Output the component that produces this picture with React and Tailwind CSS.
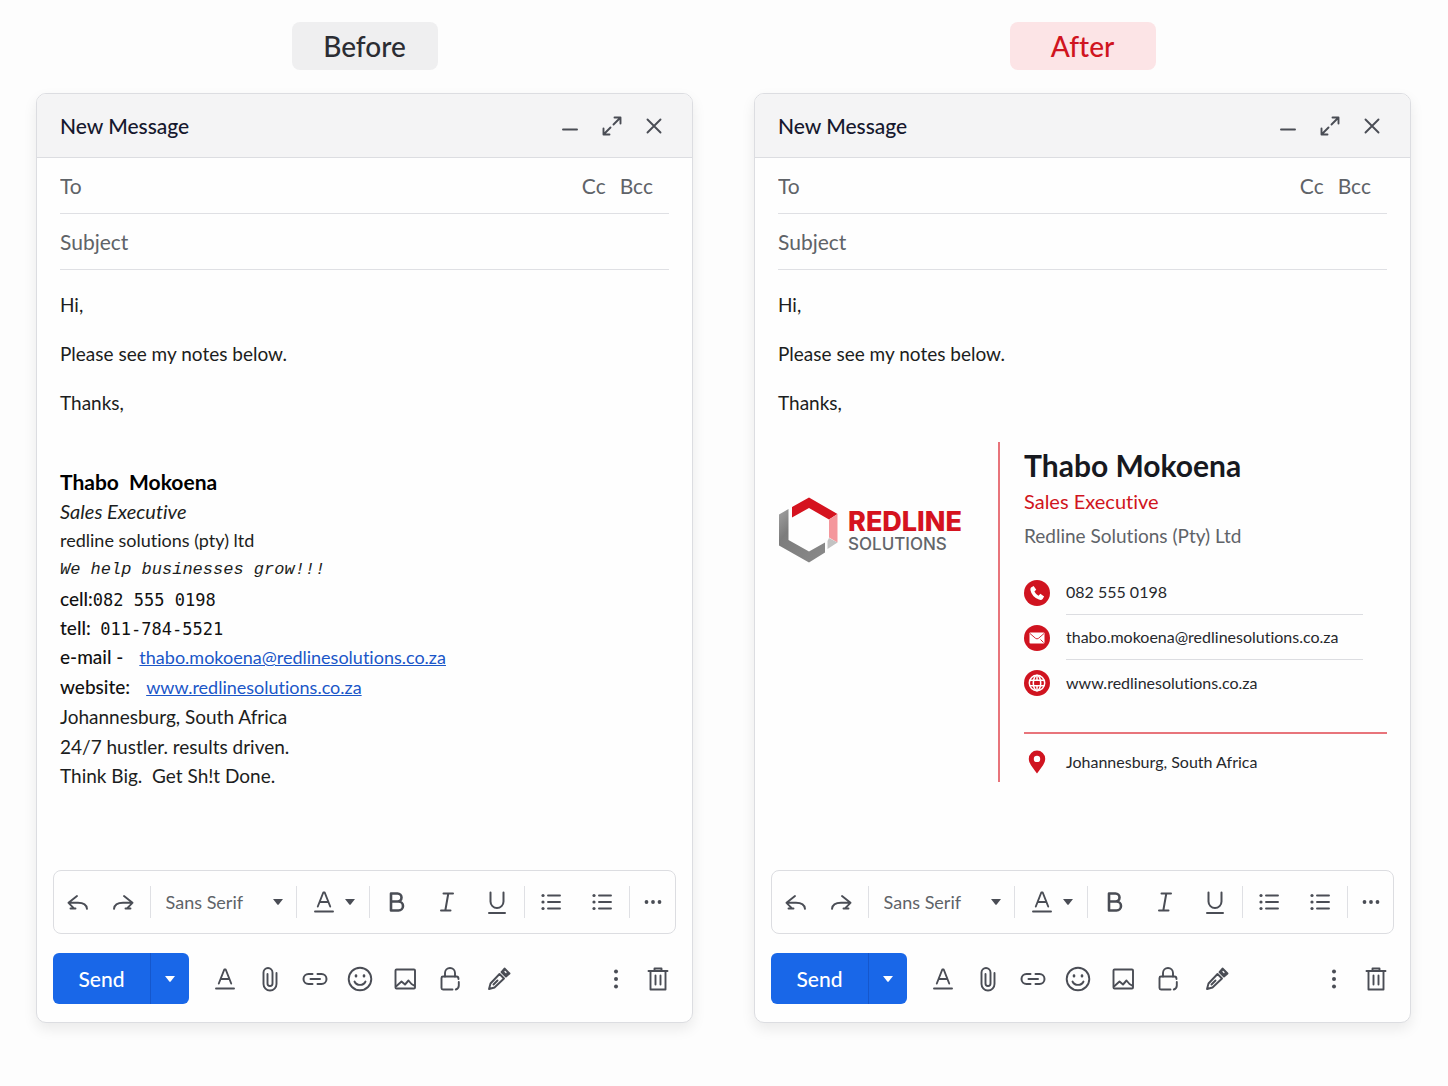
const inputText = 'placeholder:text-[#5f6368] text-[21px] leading-7 text-[#5f6368]';
const iconColor = 'text-[#4a4d55]';

const IconButton = ({ label, className = '', children }) => (
  <button type="button" aria-label={label} className={`flex shrink-0 items-center justify-center ${iconColor} ${className}`}>
    {children}
  </button>
);

const Svg = ({ size = 28, sw = 1.9, children, className = '' }) => (
  <svg
    width={size}
    height={size}
    viewBox={`0 0 ${size} ${size}`}
    fill="none"
    stroke="currentColor"
    strokeWidth={sw}
    strokeLinecap="round"
    strokeLinejoin="round"
    className={`shrink-0 ${className}`}
  >
    {children}
  </svg>
);

const Caret = ({ className = '' }) => (
  <svg width="12" height="8" viewBox="0 0 12 8" fill="currentColor" className={`shrink-0 ${className}`}>
    <path d="M1 1h10L6.500 6.800h-1z" />
  </svg>
);

const Undo = () => (
  <Svg>
    <path d="M13 8 4.500 14.800l5.500 5.500M4.500 14.800H14c5 0 8.500 1.500 9 6M6.500 20.500h5" />
  </Svg>
);

const Redo = () => (
  <Svg>
    <path d="M15 8l8.500 6.800-5.500 5.500M23.500 14.800H14c-5 0-8.500 1.500-9 6M16.500 20.500h5" />
  </Svg>
);

const TextColor = () => (
  <Svg>
    <path d="M7.800 18.500 13.300 4.500h1.400l5.500 14M9.700 14h8.600" />
    <path d="M5 23.500h18" />
  </Svg>
);

const BulletList = () => (
  <Svg>
    <path d="M11 7.500h12M11 14h12M11 20.500h12" />
    <g fill="currentColor" stroke="none">
      <circle cx="6" cy="7.500" r="1.600" />
      <circle cx="6" cy="14" r="1.600" />
      <circle cx="6" cy="20.500" r="1.600" />
    </g>
  </Svg>
);

const Divider = () => <span className="h-8 w-px shrink-0 bg-[#dfe0e4]" />;

const Header = () => (
  <header className="flex h-16 items-center justify-between border-b border-[#dcdde1] bg-[#f4f4f5] pr-6 pl-[23px]">
    <h2 className="text-[21px] leading-7 font-medium text-[#16182e]">New Message</h2>
    <div className="flex items-center gap-3.5">
      <IconButton label="Minimise">
        <Svg><path d="M7 17.500h14" /></Svg>
      </IconButton>
      <IconButton label="Full screen">
        <Svg>
          <path d="M15.500 12.500l6.500-6.500M16.500 5.500h6V11.500M12.500 15.500l-6.500 6.500M5.500 16.500v6H11.500" />
        </Svg>
      </IconButton>
      <IconButton label="Close">
        <Svg><path d="M7.500 7.500l13 13M20.500 7.500l-13 13" /></Svg>
      </IconButton>
    </div>
  </header>
);

const Fields = () => (
  <div className="px-[23px]">
    <div className="flex h-14 items-center border-b border-[#dfe0e4] pr-4">
      <input aria-label="To" placeholder="To" className={`min-w-0 flex-1 outline-none ${inputText}`} />
      <div className="flex gap-3.5 text-[21px] leading-7 text-[#5f6368]">
        <button type="button">Cc</button>
        <button type="button">Bcc</button>
      </div>
    </div>
    <div className="flex h-14 items-center border-b border-[#dfe0e4]">
      <input aria-label="Subject" placeholder="Subject" className={`min-w-0 flex-1 outline-none ${inputText}`} />
    </div>
  </div>
);

const FormatBar = () => (
  <div className="mx-4 flex h-16 items-center justify-between rounded-lg border border-[#dcdde1] pr-3 pl-2.5">
    <div className="flex gap-[17px]">
      <IconButton label="Undo"><Undo /></IconButton>
      <IconButton label="Redo"><Redo /></IconButton>
    </div>
    <Divider />
    <label className="relative flex w-[120px] items-center">
      <select aria-label="Font" className="w-full appearance-none bg-transparent pl-0.5 text-lg leading-7 text-[#5f6368] outline-none">
        <option>Sans Serif</option>
      </select>
      <Caret className="pointer-events-none absolute right-0 text-[#4a4d55]" />
    </label>
    <Divider />
    <IconButton label="Text colour" className="gap-1.5">
      <TextColor />
      <Caret />
    </IconButton>
    <Divider />
    <div className="flex gap-[22px]">
      <IconButton label="Bold">
        <Svg sw={2.6}>
          <path d="M8 5.500h6.500a4 4 0 0 1 0 8H8zM8 13.500h7.500a4.500 4.500 0 0 1 0 9H8z" />
        </Svg>
      </IconButton>
      <IconButton label="Italic">
        <Svg sw={2}><path d="M10.500 5.500h9.500M8 22.500h9.500M15.300 5.500l-3 17" /></Svg>
      </IconButton>
      <IconButton label="Underline">
        <Svg sw={2}><path d="M7.500 4.500v9a6.500 6.500 0 0 0 13 0v-9M6 25h16" /></Svg>
      </IconButton>
    </div>
    <Divider />
    <div className="flex gap-[23px]">
      <IconButton label="Bulleted list"><BulletList /></IconButton>
      <IconButton label="Numbered list"><BulletList /></IconButton>
    </div>
    <Divider />
    <IconButton label="More formatting">
      <svg width="20" height="28" viewBox="0 0 20 28" fill="currentColor">
        <circle cx="3.500" cy="14" r="1.900" />
        <circle cx="10" cy="14" r="1.900" />
        <circle cx="16.500" cy="14" r="1.900" />
      </svg>
    </IconButton>
  </div>
);

const SendBar = () => (
  <div className="mx-4 mt-[19px] mb-[18px] flex items-center justify-between">
    <div className="flex items-center">
      <div className="flex h-[51px] overflow-hidden rounded-md bg-[#1967e8] text-white">
        <button type="button" className="w-[98px] border-r border-[#1557cc] text-[21px] leading-7 font-medium">Send</button>
        <button type="button" aria-label="Send options" className="flex w-[38px] items-center justify-center">
          <Caret />
        </button>
      </div>
      <div className="ml-[22px] flex gap-[17px]">
        <IconButton label="Formatting options"><TextColor /></IconButton>
        <IconButton label="Attach files">
          <Svg>
            <path d="M20.500 8v11a6.500 6.500 0 0 1-13 0V7.500a4.500 4.500 0 0 1 9 0v11a2.500 2.500 0 0 1-5 0V9" />
          </Svg>
        </IconButton>
        <IconButton label="Insert link">
          <Svg sw={2}>
            <path d="M11.500 19H7.500a5 5 0 0 1 0-10h4M16.500 9h4a5 5 0 0 1 0 10h-4M9.500 14h9.500" />
          </Svg>
        </IconButton>
        <IconButton label="Insert emoji">
          <Svg>
            <circle cx="14" cy="14" r="11.300" />
            <path d="M8.500 16.500c2 4.500 9 4.500 11 0" />
            <path d="M10 10.500v.8M18 10.500v.8" strokeWidth="2.600" />
          </Svg>
        </IconButton>
        <IconButton label="Insert photo">
          <Svg>
            <rect x="4.500" y="4.500" width="19.500" height="19" rx="1" />
            <path d="M5.500 21l5-4.500 3.500 3 3.500-4 3 3.500 2.500 1.500" />
          </Svg>
        </IconButton>
        <IconButton label="Confidential mode">
          <Svg>
            <path d="M9 11.500V8a5 5 0 0 1 10 0v3.500" />
            <path d="M16.500 24.500H7A1.500 1.500 0 0 1 5.500 23V13A1.500 1.500 0 0 1 7 11.500h13.500q2 0 2 2.500M22.800 17v3.500q0 3-3 4" />
          </Svg>
        </IconButton>
        <IconButton label="Insert signature" className="ml-1">
          <Svg>
            <path d="M4 24l1.500-5.500 9-9.500 4.500 4.500-9.500 9zM8.500 19.500l4-4" />
            <path d="M16.500 7l3-3.500 5 5-3.500 3z" fill="currentColor" />
            <path d="M20 6.500l1 1" stroke="#fff" strokeWidth="1.200" />
          </Svg>
        </IconButton>
      </div>
    </div>
    <div className="flex items-center gap-3.5 pr-1">
      <IconButton label="More options">
        <svg width="28" height="28" viewBox="0 0 28 28" fill="currentColor">
          <circle cx="14" cy="6.500" r="2" />
          <circle cx="14" cy="14" r="2" />
          <circle cx="14" cy="21.500" r="2" />
        </svg>
      </IconButton>
      <IconButton label="Discard draft">
        <Svg>
          <path d="M4.500 6h19M10.500 6V3.500h7V6M6.500 6v18.500h15V6M11.500 10.500v9M16.500 10.500v9" />
        </Svg>
      </IconButton>
    </div>
  </div>
);

const label = 'font-medium text-[#111]';
const number = "font-['DejaVu_Sans_Mono',monospace] text-[17px] leading-none font-normal";
const link = 'ml-4 text-lg leading-none text-[#1a56c8] underline';

const PlainSignature = () => (
  <div className="mt-[50px] text-[19px] leading-[29px] text-[#1c1d20]">
    <p className="font-['Comic_Sans_MS',Lato,sans-serif] text-[21px] leading-[30px] font-bold text-black">Thabo &nbsp;Mokoena</p>
    <p className="text-xl leading-[29px] italic">Sales Executive</p>
    <p className="text-lg leading-[29px]">redline solutions (pty) ltd</p>
    <p className="font-['Liberation_Mono',monospace] text-[17px] leading-[29px] italic">We help businesses grow!!!</p>
    <p className={label}>cell:<span className={number}>082 555 0198</span></p>
    <p className={label}>tell: &nbsp;<span className={number}>011-784-5521</span></p>
    <p className="leading-[30px]">
      <span className={label}>e-mail -</span>
      <a href="mailto:thabo.mokoena@redlinesolutions.co.za" className={link}>thabo.mokoena@redlinesolutions.co.za</a>
    </p>
    <p className="leading-[30px]">
      <span className={label}>website:</span>
      <a href="https://www.redlinesolutions.co.za" className={link}>www.redlinesolutions.co.za</a>
    </p>
    <p className="leading-[30px]">Johannesburg, South Africa</p>
    <p>24/7 hustler. results driven.</p>
    <p>Think Big. &nbsp;Get Sh!t Done.</p>
  </div>
);

const Logo = () => (
  <div className="flex items-center gap-2.5">
    <svg width="60" height="66" viewBox="0 0 60 66" className="shrink-0">
      <defs>
        <linearGradient id="steel" x1="0" y1="0" x2="1" y2="1">
          <stop offset="0" stopColor="#a2a2a2" />
          <stop offset="0.300" stopColor="#7c7c7c" />
          <stop offset="1" stopColor="#8a8a8a" />
        </linearGradient>
      </defs>
      <path d="M14 10 31 .500 59.500 17 51 22.500 31 11 14 20.500z" fill="#d5131f" />
      <path d="M59.500 17v28.500l-8.500-5V22.500z" fill="#f4979c" />
      <path d="M51 41l8.500 4.500L49.500 52v-8z" fill="#c2c2c2" />
      <path d="M1 17.500l9.500-5.500v31L31 54.500l16-9v10L31 65.500 1 48.500z" fill="url(#steel)" />
    </svg>
    <div className="pt-1 font-[Inter,sans-serif]">
      <p className="text-[27px] leading-6 font-extrabold text-[#d5131f]">REDLINE</p>
      <p className="text-[17px] leading-5 font-medium text-[#63666b]">SOLUTIONS</p>
    </div>
  </div>
);

const Badge = ({ children }) => (
  <span className="flex size-[26px] shrink-0 items-center justify-center rounded-full bg-[#d01420] text-white">{children}</span>
);

const PhoneIcon = () => (
  <svg width="18" height="18" viewBox="0 0 24 24" fill="currentColor">
    <path d="M4 4.500 7.500 2.500 11 7.500 8.500 10q2 4 5.500 5.500l2.500-2.500 5 3.500-2 3.500q-1.500 2-5 .800Q5 17 3.200 8 3 5.500 4 4.500z" />
  </svg>
);

const MailIcon = () => (
  <svg width="16" height="12" viewBox="0 0 16 12">
    <rect x=".500" y=".500" width="15" height="11" rx="1" fill="currentColor" />
    <path d="M1 1.500 6.500 6.300q1.500 1.200 3 0L15 1.500M14.500 10.500l-3-3" fill="none" stroke="#d01420" strokeWidth=".900" />
  </svg>
);

const GlobeIcon = () => (
  <svg width="18" height="18" viewBox="0 0 18 18" fill="none" stroke="currentColor" strokeWidth="1.500">
    <circle cx="9" cy="9" r="7.700" />
    <ellipse cx="9" cy="9" rx="3.700" ry="7.700" />
    <path d="M2 6.200h14M2 11.800h14M9 1.500v4.700M9 11.800v4.700" />
  </svg>
);

const contacts = [
  { text: '082 555 0198', href: 'tel:0825550198', Icon: PhoneIcon },
  { text: 'thabo.mokoena@redlinesolutions.co.za', href: 'mailto:thabo.mokoena@redlinesolutions.co.za', Icon: MailIcon },
  { text: 'www.redlinesolutions.co.za', href: 'https://www.redlinesolutions.co.za', Icon: GlobeIcon },
];

const BrandedSignature = () => (
  <div className="mt-[25px] flex">
    <div className="w-[220px] shrink-0 pt-[55px]">
      <Logo />
    </div>
    <div className="min-w-0 flex-1 border-l-2 border-[#e8747b] pl-6">
      <p className="pt-[5px] text-[30px] leading-9 font-bold text-[#17191f]">Thabo Mokoena</p>
      <p className="text-xl leading-9 text-[#d01420]">Sales Executive</p>
      <p className="text-[19px] leading-[33px] text-[#5f6368]">Redline Solutions (Pty) Ltd</p>
      <ul className="mt-[18px] mr-6 text-base leading-6 text-[#26282c]">
        {contacts.map(({ text, href, Icon }, i) => (
          <li key={text} className="flex h-[45px] items-center gap-4">
            <Badge><Icon /></Badge>
            <a href={href} className={`flex h-full flex-1 items-center ${i < 2 ? 'border-b border-[#dcdde1]' : ''}`}>{text}</a>
          </li>
        ))}
      </ul>
      <div className="mt-[27px] flex h-[50px] items-center gap-4 border-t-2 border-[#e8747b] pt-2">
        <span className="flex w-[26px] justify-center">
          <svg width="18" height="24" viewBox="0 0 18 24" fill="#d01420">
            <path fillRule="evenodd" d="M9 .500a8.200 8.200 0 0 1 8.200 8.200c0 5.300-5 10-8.200 14.800C5.800 18.700.800 14 .800 8.700A8.200 8.200 0 0 1 9 .500zm0 5.200a3.200 3.200 0 1 0 0 6.400 3.200 3.200 0 0 0 0-6.400z" />
          </svg>
        </span>
        <span className="text-base leading-6 text-[#26282c]">Johannesburg, South Africa</span>
      </div>
    </div>
  </div>
);

const Composer = ({ title, badgeClass, children }) => (
  <section className="flex min-w-0 flex-col items-center">
    <h1 className={`flex h-12 w-[146px] items-center justify-center rounded-lg text-[28px] leading-8 font-medium ${badgeClass}`}>{title}</h1>
    <article className="mt-[23px] flex w-full flex-1 flex-col overflow-hidden rounded-[10px] border border-[#dcdde1] bg-[#fefefe] shadow-[0_6px_14px_rgba(0,0,0,0.08)]">
      <Header />
      <Fields />
      <div className="flex-1 px-[23px] pt-5 pb-20">
        <div className="space-y-5 text-[19px] leading-[29px] text-[#1c1d20]">
          <p>Hi,</p>
          <p>Please see my notes below.</p>
          <p>Thanks,</p>
        </div>
        {children}
      </div>
      <FormatBar />
      <SendBar />
    </article>
  </section>
);

const App = () => (
  <main className="grid min-h-screen grid-cols-2 content-start gap-[61px] bg-[#fdfdfd] pt-[22px] pr-[37px] pb-12 pl-9 font-[Lato,sans-serif] [font-variant-ligatures:no-common-ligatures]">
    <Composer title="Before" badgeClass="bg-[#efeff0] text-[#2b2d33]">
      <PlainSignature />
    </Composer>
    <Composer title="After" badgeClass="bg-[#fce4e6] text-[#d01420]">
      <BrandedSignature />
    </Composer>
  </main>
);

export default App;
